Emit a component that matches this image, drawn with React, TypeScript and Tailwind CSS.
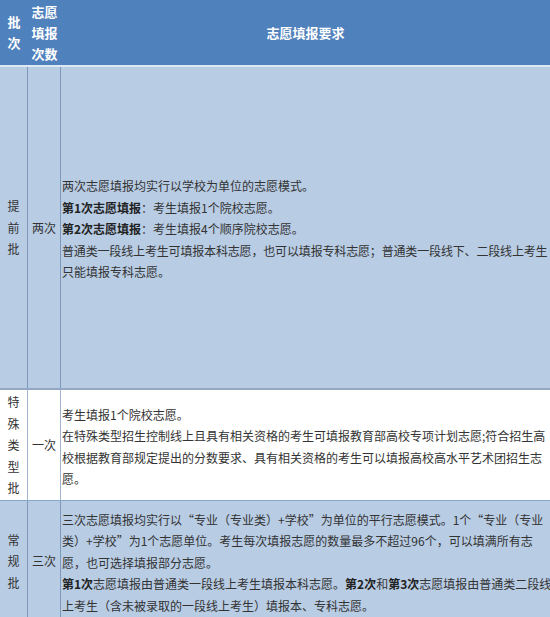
const font = "font-['Noto_Sans_CJK_SC','Microsoft_YaHei',sans-serif]";

function Stack({ chars }: { chars: string }) {
  return (
    <div className="flex flex-col items-center">
      {chars.split('').map((c, i) => (
        <span key={i}>{c}</span>
      ))}
    </div>
  );
}

interface RowProps {
  label: string;
  times: string;
  lines: React.ReactNode[];
  height: string;
  bg: string;
  border: string;
  line: string;
}

function Row({ label, times, lines, height, bg, border, line }: RowProps) {
  return (
    <div className={`grid grid-cols-[28px_33px_1fr] ${height} ${bg} ${border}`}>
      <div className={`flex items-center justify-center border-r ${line}`}>
        <Stack chars={label} />
      </div>
      <div className={`flex items-center justify-center border-r ${line}`}>
        <span>{times}</span>
      </div>
      <div className="flex flex-col justify-center pl-[1px] pt-[3px] overflow-hidden">
        {lines.map((l, i) => (
          <div key={i} className="whitespace-nowrap">
            {l}
          </div>
        ))}
      </div>
    </div>
  );
}

export default function App() {
  return (
    <div className={`w-[550px] h-[617px] overflow-hidden ${font} text-[12px] leading-[21.5px] text-[#333]`}>
      {/* 表头 */}
      <div className="grid grid-cols-[28px_33px_1fr] h-[67px] bg-[#4f81bd] border-b-2 border-[#dde8f4] text-white font-bold text-[13px] leading-[21px]">
        <div className="flex items-center justify-center pb-[1px]">
          <Stack chars="批次" />
        </div>
        <div className="flex flex-col items-center justify-center pb-[1px]">
          <span>志愿</span>
          <span>填报</span>
          <span>次数</span>
        </div>
        <div className="flex items-center justify-center pb-[1px]">志愿填报要求</div>
      </div>

      <Row
        label="提前批"
        times="两次"
        height="h-[323px]"
        bg="bg-[#b8cce4]"
        border="border-b-2 border-[#94a8c4]"
        line="border-[#7f98bd]"
        lines={[
          '两次志愿填报均实行以学校为单位的志愿模式。',
          <>
            <b className="text-[#222]">第1次志愿填报</b>：考生填报1个院校志愿。
          </>,
          <>
            <b className="text-[#222]">第2次志愿填报</b>：考生填报4个顺序院校志愿。
          </>,
          <span className="tracking-[-0.16px]">
            普通类一段线上考生可填报本科志愿，也可以填报专科志愿；普通类一段线下、二段线上考生
          </span>,
          '只能填报专科志愿。',
        ]}
      />

      <Row
        label="特殊类型批"
        times="一次"
        height="h-[111px]"
        bg="bg-white"
        border="border-b border-[#8aa6c9]"
        line="border-[#a3b6cf]"
        lines={[
          '考生填报1个院校志愿。',
          '在特殊类型招生控制线上且具有相关资格的考生可填报教育部高校专项计划志愿;符合招生高',
          '校根据教育部规定提出的分数要求、具有相关资格的考生可以填报高校高水平艺术团招生志',
          '愿。',
        ]}
      />

      <Row
        label="常规批"
        times="三次"
        height="h-[120px]"
        bg="bg-[#b8cce4]"
        border=""
        line="border-[#7f98bd]"
        lines={[
          '三次志愿填报均实行以“专业（专业类）+学校”为单位的平行志愿模式。1个“专业（专业',
          '类）+学校”为1个志愿单位。考生每次填报志愿的数量最多不超过96个，可以填满所有志',
          '愿，也可选择填报部分志愿。',
          <>
            <b className="text-[#222]">第1次</b>志愿填报由普通类一段线上考生填报本科志愿。
            <b className="text-[#222]">第2次</b>和<b className="text-[#222]">第3次</b>志愿填报由普通类二段线
          </>,
          '上考生（含未被录取的一段线上考生）填报本、专科志愿。',
        ]}
      />
    </div>
  );
}
